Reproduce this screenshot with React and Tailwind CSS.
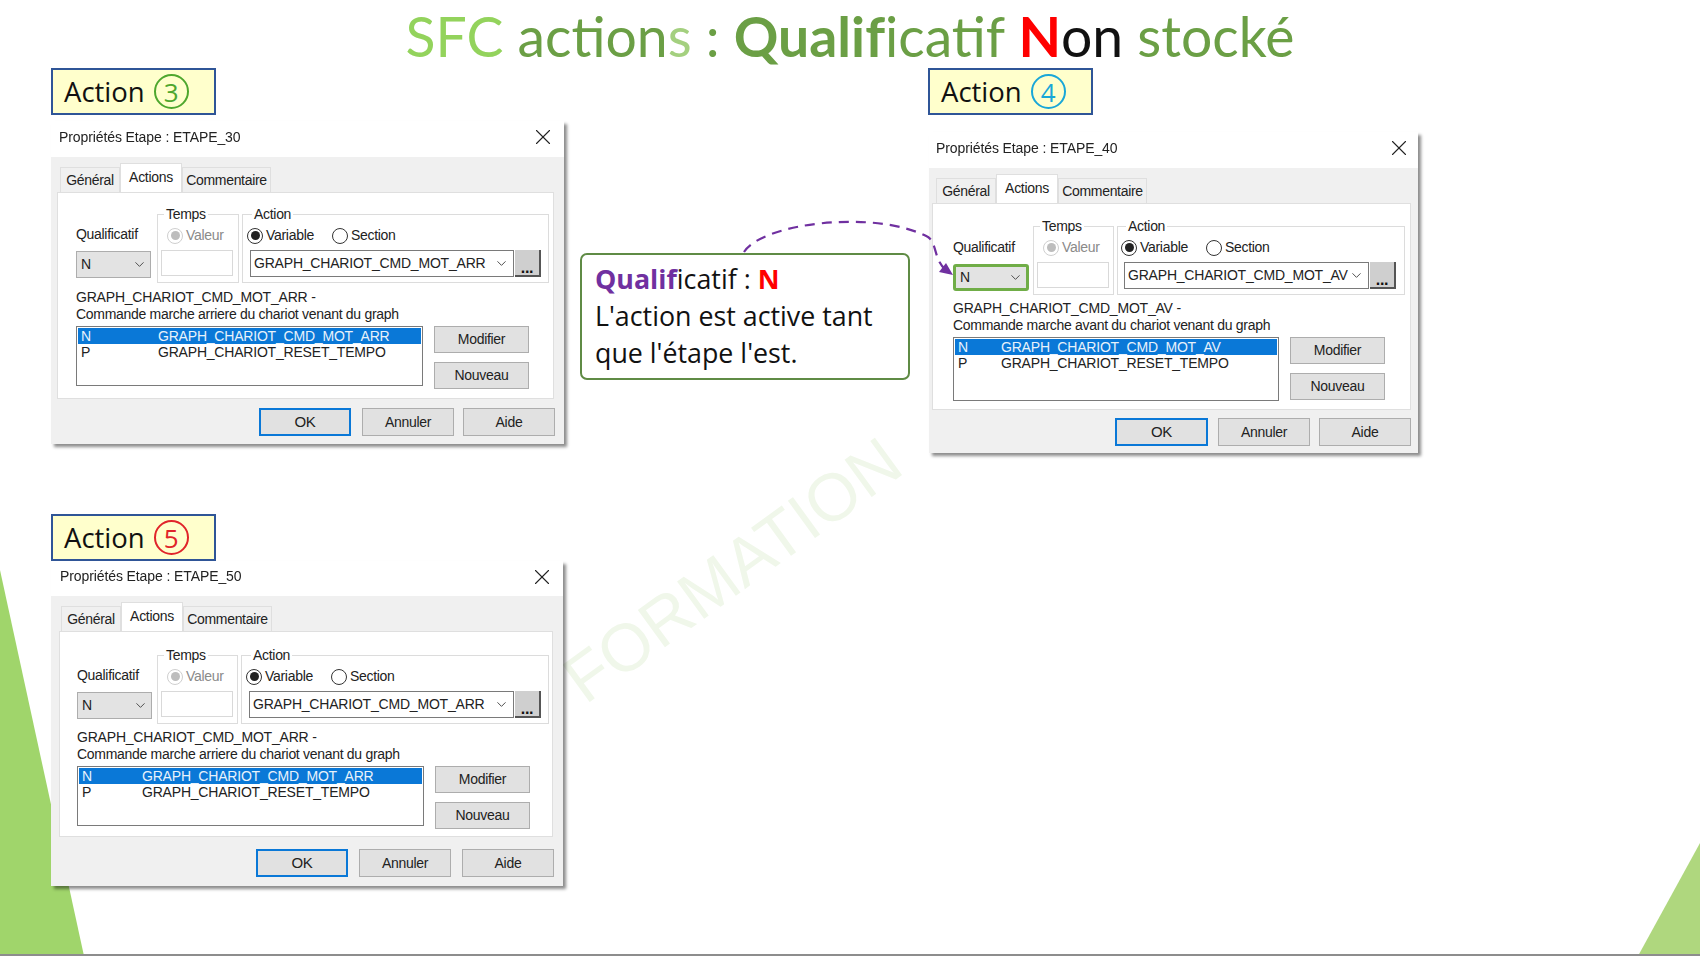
import { ChevronDown, X } from "lucide-react"

const dialogs = [
  {
    id: "d3",
    pos: "left-[51px] top-[121px] w-[513px] h-[323px]",
    title: "Propriétés Etape : ETAPE_30",
    titleBar: "h-[36px] pl-[8px] pr-[8px] pb-[4px]",
    tabsPad: "pl-[9px]",
    pane: "ml-[6px] mr-[10px] h-[207px] pl-[18px]",
    row: "mt-[13px] mb-[6px]",
    qual: "w-[75px] mb-[5px]",
    group1: "ml-[6px] w-[82px]",
    group2: "ml-[3px] w-[307px] pl-[7px]",
    combo: "w-[264px]",
    variable: "GRAPH_CHARIOT_CMD_MOT_ARR",
    desc: "Commande marche arriere du chariot venant du graph",
    list: "w-[347px] h-[60px]",
    col: "w-[80px]",
    okW: "w-[92px] mr-[2px]",
    footer: "mt-[9px] pr-[9px] gap-x-[9px]",
  },
  {
    id: "d4",
    pos: "left-[929px] top-[132px] w-[489px] h-[321px]",
    title: "Propriétés Etape : ETAPE_40",
    titleBar: "h-[36px] pl-[7px] pr-[6px] pb-[4px]",
    tabsPad: "pl-[7px]",
    pane: "ml-[3px] mr-[7px] h-[207px] pl-[20px]",
    row: "mt-[14px] mb-[5px]",
    qual: "w-[76px] mb-[4px]",
    group1: "ml-[4px] w-[81px]",
    group2: "ml-[3px] w-[288px] pl-[6px]",
    combo: "w-[245px]",
    variable: "GRAPH_CHARIOT_CMD_MOT_AV",
    desc: "Commande marche avant du chariot venant du graph",
    list: "w-[326px] h-[64px]",
    col: "w-[46px]",
    okW: "w-[93px] mr-[1px]",
    footer: "mt-[8px] pr-[7px] gap-x-[9px]",
    highlight: true,
  },
  {
    id: "d5",
    pos: "left-[51px] top-[561px] w-[512px] h-[325px]",
    title: "Propriétés Etape : ETAPE_50",
    titleBar: "h-[35px] pl-[9px] pr-[8px] pb-[4px]",
    tabsPad: "pl-[10px]",
    pane: "ml-[8px] mr-[10px] h-[206px] pl-[17px]",
    row: "mt-[15px] mb-[5px]",
    qual: "w-[75px] mb-[5px]",
    group1: "ml-[5px] w-[81px]",
    group2: "ml-[3px] w-[308px] pl-[7px]",
    combo: "w-[265px]",
    variable: "GRAPH_CHARIOT_CMD_MOT_ARR",
    desc: "Commande marche arriere du chariot venant du graph",
    list: "w-[347px] h-[60px]",
    col: "w-[63px]",
    okW: "w-[92px]",
    footer: "mt-[12px] pr-[9px] gap-x-[11px]",
  },
]

const WinButton = ({ children, className = "" }) => (
  <div className={`flex items-center justify-center bg-[#e1e1e1] text-[14px] text-[#222] ${className}`}>
    {children}
  </div>
)

const Radio = ({ checked, disabled, label }) => (
  <div className="flex items-center gap-x-[3px]">
    <span className={`flex items-center justify-center w-[16px] h-[16px] rounded-full border ${disabled ? "border-[#cfcfcf]" : "border-[#333] bg-white"}`}>
      {checked && <span className={`w-[9px] h-[9px] rounded-full ${disabled ? "bg-[#bdbdbd]" : "bg-[#222]"}`} />}
    </span>
    <span className={disabled ? "text-[#8a8a8a]" : "text-[#222]"}>{label}</span>
  </div>
)

const Dialog = ({ d }) => (
  <div className={`absolute z-10 flex flex-col bg-white font-['Liberation_Sans',sans-serif] text-[14px] tracking-[-0.3px] text-[#222] shadow-[3px_3px_3px_rgba(0,0,0,0.45)] blur-[0.4px] ${d.pos}`}>
    <div className={`flex items-center justify-between shrink-0 ${d.titleBar}`}>
      <span className="tracking-[-0.1px]">{d.title}</span>
      <X size={26} strokeWidth={1} className="-my-[4px] text-[#222]" />
    </div>
    <div className="flex flex-col flex-1 bg-[#f0f0f0]">
      <div className={`flex items-end h-[35px] shrink-0 ${d.tabsPad}`}>
        <div className="flex items-center justify-center w-[60px] h-[25px] pt-[1px] bg-[#f0f0f0] border border-b-0 border-[#dfdfdf]">Général</div>
        <div className="flex items-start justify-center w-[62px] h-[29px] pt-[3px] bg-white border border-b-0 border-[#dfdfdf]">Actions</div>
        <div className="flex items-center justify-center w-[89px] h-[25px] pt-[1px] bg-[#f0f0f0] border border-b-0 border-[#dfdfdf]">Commentaire</div>
      </div>
      <div className={`flex flex-col bg-white border border-[#dfdfdf] ${d.pane}`}>
        <div className={`flex items-end h-[77px] shrink-0 ${d.row}`}>
          <div className={`flex flex-col gap-y-[6px] ${d.qual}`}>
            <span>Qualificatif</span>
            <div className={`flex items-center justify-between h-[27px] pl-[4px] pr-[3px] bg-[#e3e3e3] ${d.highlight ? "border-[3px] border-[#70ad47] rounded-[3px]" : "border border-[#adadad]"}`}>
              <span>N</span>
              <ChevronDown size={15} strokeWidth={1.5} className="text-[#444]" />
            </div>
          </div>
          <fieldset className={`flex flex-col gap-y-[4px] h-[77px] pt-[2px] px-[3px] border border-[#dcdcdc] ${d.group1}`}>
            <legend className="ml-[3px] px-[2px] leading-[17px] text-[#222]">Temps</legend>
            <div className="ml-[6px]">
              <Radio checked disabled label="Valeur" />
            </div>
            <div className="w-[72px] h-[26px] bg-white border border-[#d9d9d9]" />
          </fieldset>
          <fieldset className={`flex flex-col gap-y-[4px] h-[77px] pt-[2px] border border-[#dcdcdc] ${d.group2}`}>
            <legend className="ml-[2px] px-[2px] leading-[17px] text-[#222]">Action</legend>
            <div className="flex items-center gap-x-[18px] -ml-[3px]">
              <Radio checked label="Variable" />
              <Radio label="Section" />
            </div>
            <div className="flex items-stretch h-[27px]">
              <div className={`flex items-center justify-between pl-[3px] pr-[4px] bg-white border border-[#7a7a7a] tracking-[-0.2px] ${d.combo}`}>
                <span>{d.variable}</span>
                <ChevronDown size={15} strokeWidth={1.5} className="text-[#444]" />
              </div>
              <div className="flex items-end justify-center w-[26px] ml-[1px] bg-[#cfcfcf] border-r-2 border-b-2 border-[#555] text-[16px] font-bold leading-[14px] text-[#111]">...</div>
            </div>
          </fieldset>
        </div>
        <div className="leading-[17px] shrink-0">
          <div className="tracking-[-0.2px]">{d.variable} -</div>
          <div>{d.desc}</div>
        </div>
        <div className="flex mt-[3px]">
          <div className={`p-[1px] bg-white border border-[#7a7a7a] leading-[16px] tracking-[-0.2px] ${d.list}`}>
            <div className="flex bg-[#0a78d7] text-[#e8f2fb]">
              <span className={`pl-[3px] shrink-0 ${d.col}`}>N</span>
              <span>{d.variable}</span>
            </div>
            <div className="flex">
              <span className={`pl-[3px] shrink-0 ${d.col}`}>P</span>
              <span>GRAPH_CHARIOT_RESET_TEMPO</span>
            </div>
          </div>
          <div className="flex flex-col gap-y-[9px] ml-[11px]">
            <WinButton className="w-[95px] h-[27px] border border-[#adadad]">Modifier</WinButton>
            <WinButton className="w-[95px] h-[27px] border border-[#adadad]">Nouveau</WinButton>
          </div>
        </div>
      </div>
      <div className={`flex justify-end ${d.footer}`}>
        <WinButton className={`h-[28px] border-2 border-[#0a78d7] text-[15px] ${d.okW}`}>OK</WinButton>
        <WinButton className="w-[92px] h-[28px] border border-[#adadad]">Annuler</WinButton>
        <WinButton className="w-[92px] h-[28px] border border-[#adadad]">Aide</WinButton>
      </div>
    </div>
  </div>
)

const ActionTag = ({ n, pos, ring }) => (
  <div className={`absolute z-20 flex items-center w-[165px] h-[47px] pl-[11px] gap-x-[9px] bg-[#ffffcc] border-2 border-[#2f5597] font-['Open_Sans',sans-serif] text-[27.5px] text-[#111] ${pos}`}>
    <span>Action</span>
    <span className={`flex items-center justify-center w-[35px] h-[35px] rounded-full border-2 text-[26px] font-normal leading-none ${ring}`}>{n}</span>
  </div>
)

export default function App() {
  return (
    <div className="relative w-[1700px] h-[956px] overflow-hidden bg-white">
      {/* decor */}
      <svg className="absolute left-0 top-[570px]" width="84" height="386" viewBox="0 0 84 386">
        <polygon points="0,0 84,386 0,386" fill="#a0d56b" />
      </svg>
      <svg className="absolute left-[1636px] top-[843px]" width="64" height="113" viewBox="0 0 64 113">
        <polygon points="64,0 64,113 2,113" fill="#afd77e" />
      </svg>
      <div className="absolute left-0 bottom-0 w-full h-[2px] bg-[#8d8d8d]" />
      <div className="absolute left-[522px] top-[536px] w-[420px] -rotate-[36deg] whitespace-nowrap text-center font-['Liberation_Sans',sans-serif] text-[67px] leading-none text-[#f0f7ea]">
        FORMATION
      </div>

      <h1 className="absolute left-0 top-[1px] w-full text-center font-['Lato',sans-serif] text-[55.3px] leading-[70px] font-normal text-[#6b9f45]">
        <span className="text-[#93d35c]">SFC</span> action<span className="text-[#a4d07f]">s</span> : <b>Qualif</b>icatif <b className="text-[#ff0000]">N</b><span className="text-[#111]">on</span> stocké
      </h1>

      <ActionTag n="3" pos="left-[51px] top-[68px]" ring="border-[#4ea72e] text-[#4ea72e]" />
      <ActionTag n="4" pos="left-[928px] top-[68px]" ring="border-[#19a7d8] text-[#19a7d8]" />
      <ActionTag n="5" pos="left-[51px] top-[514px]" ring="border-[#e0242a] text-[#e0242a]" />

      {dialogs.map((d) => (
        <Dialog key={d.id} d={d} />
      ))}

      <div className="absolute left-[580px] top-[253px] z-20 w-[330px] h-[127px] pt-[5px] pl-[13px] bg-white border-[2px] border-[#5f8b45] rounded-[7px] font-['Open_Sans',sans-serif] text-[26.8px] leading-[37px] text-[#111]">
        <div>
          <b className="text-[#7030a0]">Qualif</b>icatif : <b className="text-[#ff0000]">N</b>
        </div>
        <div>L'action est active tant</div>
        <div>que l'étape l'est.</div>
      </div>

      <svg className="absolute left-[740px] top-[215px] z-30" width="220" height="70" viewBox="0 0 220 70" fill="none">
        <path d="M4 37 C22 8 135 -6 188 22 C197 28 194 46 206 55" stroke="#7030a0" strokeWidth="2.2" strokeDasharray="10 7" />
        <path d="M213 60 L199 57 L206 48 Z" fill="#7030a0" />
      </svg>
    </div>
  )
}
